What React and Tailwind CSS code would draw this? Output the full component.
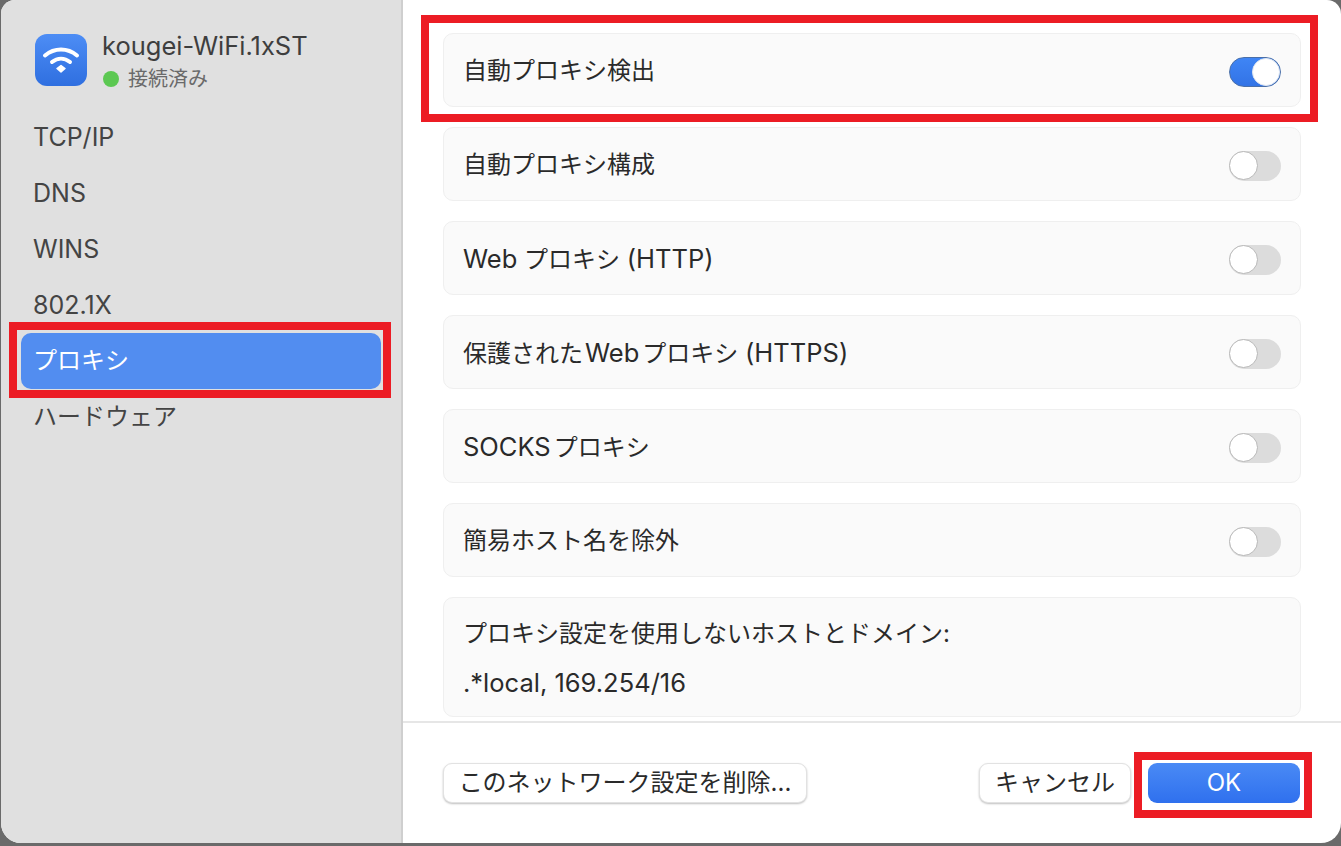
const font = { fontFamily: 'Inter, "Noto Sans CJK JP", sans-serif' };

function Toggle({ on }) {
  return on ? (
    <div className="mt-[2px] flex h-[30px] w-[52px] justify-end rounded-full border border-[#4a6fa8] bg-gradient-to-b from-[#3f85f5] to-[#3273e6]">
      <div className="h-[28px] w-[28px] rounded-full border border-[#dfe6f0] bg-white" />
    </div>
  ) : (
    <div className="mt-[2px] h-[30px] w-[52px] rounded-full bg-[#dcdcdc]">
      <div className="h-[29px] w-[29px] rounded-full border border-[#b8b8b8] bg-white" />
    </div>
  );
}

function Row({ children, on }) {
  return (
    <div className="flex h-[74px] items-center justify-between rounded-[10px] border border-[#efefef] bg-[#fafafa] pl-[19px] pr-[19px] pt-[2px]">
      <span className="text-[24px] leading-none text-[#2a2a2a]">{children}</span>
      <Toggle on={on} />
    </div>
  );
}

function L({ children }) {
  return <span className="text-[25.5px]">{children}</span>;
}

const nav = ["TCP/IP", "DNS", "WINS", "802.1X"];

export default function App() {
  return (
    <div className="relative h-[846px] w-[1341px] overflow-hidden bg-[#6a6a6a]" style={font}>
      <div className="ml-px flex h-[843px] overflow-hidden rounded-b-[20px] rounded-t-[14px] bg-white">
        <aside className="w-[402px] shrink-0 border-r-2 border-[#cfcfcf] bg-[#e0e0e0] pl-5 pr-5 pt-[34px]">
          <div className="flex gap-[15px] pl-[14px]">
            <div className="flex h-[52px] w-[52px] items-center justify-center rounded-[12px] bg-gradient-to-b from-[#4d8df5] to-[#2f6fe0]">
              <svg width="38" height="30" viewBox="0 0 38 30" fill="none" stroke="white" strokeLinecap="round">
                <path d="M3 10.5C12.5 2.5 25.5 2.5 35 10.5" strokeWidth="4" />
                <path d="M10 17C15.5 12.5 22.5 12.5 28 17" strokeWidth="4" />
                <path d="M15 23.5L19 20.5L23 23.5L19 27Z" fill="white" strokeWidth="1.5" strokeLinejoin="round" />
              </svg>
            </div>
            <div className="flex flex-col">
              <span className="mt-[-2px] text-[25.5px] leading-[28px] text-[#3e3e3e]">kougei-WiFi.1xST</span>
              <div className="ml-px mt-[5px] flex items-center gap-[9px]">
                <span className="h-4 w-4 rounded-full bg-[#5cc852]" />
                <span className="text-[20px] leading-[28px] text-[#6a6a6a]">接続済み</span>
              </div>
            </div>
          </div>
          <nav className="mt-[16px] flex flex-col">
            {nav.map((n) => (
              <div key={n} className="flex h-14 items-center pl-3 pt-px text-[25px] text-[#444444]">{n}</div>
            ))}
            <div className="flex h-14 items-center rounded-[10px] bg-[#528df0] pl-3 text-[24px] text-white">プロキシ</div>
            <div className="flex h-14 items-center pl-3 text-[24px] text-[#444444]">ハードウェア</div>
          </nav>
        </aside>
        <main className="flex min-w-0 flex-1 flex-col">
          <div className="flex flex-col gap-5 pl-10 pr-[40px] pt-[33px]">
            <Row on>自動プロキシ検出</Row>
            <Row>自動プロキシ構成</Row>
            <Row><L>Web</L> プロキシ <L>(HTTP)</L></Row>
            <Row>保護された<span className="ml-[2px] mr-[3px] text-[25.5px]">Web</span>プロキシ <L>(HTTPS)</L></Row>
            <Row><L>SOCKS</L><span className="ml-[3px]">プロキシ</span></Row>
            <Row>簡易ホスト名を除外</Row>
            <div className="flex h-[120px] flex-col justify-center gap-[24px] rounded-[10px] border border-[#efefef] bg-[#fafafa] pl-[19px] pt-px text-[24px] leading-[25px] text-[#2a2a2a]">
              <span>プロキシ設定を使用しないホストとドメイン:</span>
              <span className="text-[25.5px]">.*local, 169.254/16</span>
            </div>
          </div>
          <div className="mt-[4px] flex flex-1 items-start justify-between border-t-2 border-[#e6e6e6] pl-10 pr-[41px] pt-[40px]">
            <button className="h-10 w-[364px] rounded-[9px] border border-[#e2e2e2] bg-white text-[24px] leading-none text-[#2a2a2a] shadow-[0_1px_2px_rgba(0,0,0,0.25)]">このネットワーク設定を削除...</button>
            <div className="flex gap-[17px]">
              <button className="h-10 w-[152px] rounded-[9px] border border-[#e2e2e2] bg-white text-[24px] leading-none text-[#2a2a2a] shadow-[0_1px_2px_rgba(0,0,0,0.25)]">キャンセル</button>
              <button className="h-10 w-[152px] rounded-[9px] bg-gradient-to-b from-[#4a8af5] to-[#2f70ee] text-[24px] leading-none text-white">OK</button>
            </div>
          </div>
        </main>
      </div>
      <div className="absolute left-[421px] top-[15px] h-[107px] w-[897px] border-[8px] border-[#ec1c24]" />
      <div className="absolute left-[9px] top-[322px] h-[76px] w-[382px] border-[8px] border-[#ec1c24]" />
      <div className="absolute left-[1134px] top-[752px] h-[66px] w-[178px] border-[8px] border-[#ec1c24]" />
    </div>
  );
}
